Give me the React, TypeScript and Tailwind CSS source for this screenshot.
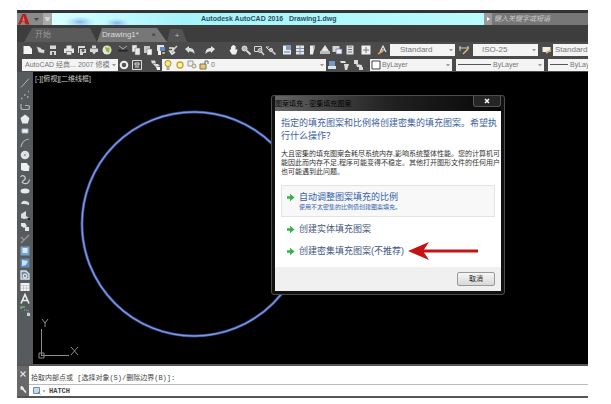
import React from "react";

type Glyph = React.ReactNode;

const g: Record<string, Glyph> = {
  new: <path d="M1.5 2h6l2.5 3v5H1.5z" fill="#f4f4f4" />,
  open: <path d="M1.500 2.500l4 1 1 1.500 3.500 1-1 3.500-5.500-1z" fill="#d9dcdd" stroke="#444" strokeWidth=".5" />,
  save: <g fill="#d6d9dc"><path d="M3 1.500h6v3.500H3zM3 7h6v4H3z" /><path d="M5 8h2v3H5z" fill="#555" /></g>,
  print: <g fill="#e6e6e6"><path d="M3.500 1.500h5V5h-5z" /><path d="M1 4.500h10V9H1z" /><path d="M3.500 7.500h5V11h-5z" stroke="#555" strokeWidth=".6" /></g>,
  preview: <g fill="#d8dadb"><path d="M2 2h7v2H3v5H2z" /><path d="M4 5h6v4H7v2H4z" /><circle cx="7" cy="6.500" r="1.500" fill="#555" /></g>,
  publish: <g fill="#d6d6d6"><path d="M4 1.500h4V4H4zM2 4.500h8V8H2z" /><path d="M4 8h4l-2 2.500z" /></g>,
  globe: <g><circle cx="6" cy="6" r="4.500" fill="#e3e8d8" /><path d="M4 3l5 1-1 5-3-2z" fill="#8fb64b" /><path d="M7 2l3 1-1 3z" fill="#e8c95a" /></g>,
  cut: <g stroke="#a9a9a9" fill="none"><path d="M2 2l6 4M10 2L4 6" /><path d="M1.500 6.500h9" stroke="#242424" strokeWidth="2" /></g>,
  copy: <g fill="#e9e9e9" stroke="#666" strokeWidth=".5"><path d="M2 1h5v7H2z" /><path d="M5 4h5v7H5z" /></g>,
  paste: <g><path d="M2 2h6v7H2z" fill="#c8c8c8" /><path d="M5 5h5v6H5z" fill="#f5f5f5" stroke="#666" strokeWidth=".5" /></g>,
  match: <g><path d="M2 1h7v6H2z" fill="#dfe8f2" /><path d="M5 3h5v4H5z" fill="#5e89bd" /><path d="M3 7l3 0v4H3z" fill="#f2f2f2" /><path d="M7 8h3v2H7z" fill="#c9a54a" /></g>,
  brush: <g fill="none" strokeWidth="1.700"><path d="M10 2L6 6" stroke="#e2c89a" /><path d="M2 4h4v3H3l2 3 3-2" stroke="#e5e5e5" /></g>,
  undo: <path d="M1 5l4-3v2c4 0 5.500 2 5.500 6C9 8 7.500 7.500 5 7.500V9z" fill="#d8dde0" />,
  redo: <path d="M11 5L7 2v2C3 4 1.500 6 1.500 10 3 8 4.500 7.500 7 7.500V9z" fill="#e1e4e6" />,
  hand: <path d="M3 5V2.500h1V1.500h1.200V1h1.200v1h1.200v4l1-1 1 .7L8 10.500H4L1.500 6.500z" fill="#f0f0f0" />,
  zoom: <g stroke="#dedede" fill="#b7bdc2"><circle cx="4.500" cy="4.500" r="2.500" /><path d="M6.500 6.500l4 4" strokeWidth="1.800" /></g>,
  zoomWin: <g fill="none" stroke="#d5d5d5"><path d="M1.500 2.500h7v5h-7z" /><circle cx="7" cy="6.500" r="2" fill="#999" /><path d="M8.500 8l2.500 3" strokeWidth="1.500" /></g>,
  zoomPrev: <g stroke="#d5d5d5" fill="#bbb"><path d="M1 3l3 3M1 3h3" fill="none" /><circle cx="6" cy="6" r="1.700" /><path d="M7.500 7.500l3 3" strokeWidth="1.600" /></g>,
  props: <g><path d="M2 1.500h8v9H2z" fill="#e9eef3" /><path d="M5 1.500h5V6H5z" fill="#7e9fc3" /><path d="M3 8h6" stroke="#777" /></g>,
  grid: <g><path d="M2 1.500h8v9H2z" fill="#e3e8ee" /><path d="M6 2v8M2 4.500h8M2 7.500h8" stroke="#7f93aa" /></g>,
  palette: <g><path d="M4 1.500h5l-2 9H4z" fill="#eee" /><path d="M7 2h2v3H7z" fill="#a0b2c6" /></g>,
  sheet: <g fill="#e6e6e6"><path d="M6 1l4 6H2z" /><path d="M1 7h10v3H1z" fill="#bdbdbd" /></g>,
  markup: <g><path d="M1.500 2h7v6h-7z" fill="#d5d5d5" /><path d="M5 5h6v5H5z" fill="#edf1f5" stroke="#59718e" strokeWidth=".7" /></g>,
  calc: <g><path d="M2.500 1.500h7v9h-7z" fill="#dde1e4" /><path d="M4 3h4M4 5.500h4M4 8h4" stroke="#707a84" /></g>,
  help: <g><path d="M1.500 1.500h9v9h-9z" fill="#f1f1f1" /><path d="M6 3v6M3 6h6" stroke="#777" /></g>,
  textStyle: <g><path d="M3 8l3-6 3 6M4 6h4" fill="none" stroke="#e7e7e7" strokeWidth="1.200" /><path d="M1 10l5-3" stroke="#e0a24d" strokeWidth="1.500" /></g>,
  dimStyle: <g><path d="M1 4h10M2 2v5M10 2v3" stroke="#ccc" fill="none" /><path d="M5 10l5-5" stroke="#e0ae55" strokeWidth="1.700" /></g>,
  tableStyle: <g><path d="M1.500 3h8v5h-8z" fill="#eee" /><path d="M5 9l5-3" stroke="#e0ae55" strokeWidth="1.700" /></g>,
  gear: <circle cx="6" cy="6" r="3.300" fill="#555" stroke="#f0f0f0" strokeWidth="2" />,
  workspace: <g fill="none" stroke="#ddd"><path d="M1.500 1.500h9v9h-9z" /><path d="M4 4h4v2H4zM4 8h4" /></g>,
  layers: <g fill="#ddd"><path d="M2 1.500h4l1 3H3z" /><path d="M4 5h5l2 2-4 1z" /><path d="M7 8h4v3H8z" fill="#f5f5f5" /></g>,
  bulb: <g><circle cx="6" cy="4.500" r="3" fill="#ffee75" stroke="#a78c28" /><path d="M4.500 8h3v3h-3z" fill="#aaa" /></g>,
  sun: <circle cx="6" cy="6" r="3" fill="#fff3a0" stroke="#c4a135" strokeWidth="1.300" />,
  freeze: <g fill="#eee" stroke="#999"><path d="M2 2h5v5H2z" /><circle cx="8" cy="7" r="2" fill="#f6e9a8" /></g>,
  lock: <g><path d="M2 5h6v5H2z" fill="#e0c978" stroke="#877540" /><path d="M7 5V2h3v3" fill="none" stroke="#666" /></g>,
  swatch: <path d="M2 2h8v8H2z" fill="#fff" stroke="#444" />,
  layerA: <g><path d="M3 2h6v5H3z" fill="#6f9bc7" /><path d="M2 7h8v3H2z" fill="#dbe4ea" /></g>,
  layerB: <g fill="#ddd"><path d="M1 2h5l1 2H2z" /><path d="M5 5h5l-2 6H6z" /></g>,
  layerC: <g fill="#ddd"><path d="M2 1h4v4H2z" /><path d="M4 5l6 1v2H5z" /><path d="M7 8h4v3H7z" /></g>,
  line: <path d="M2 10.500L10 1.500" stroke="#aab2b5" />,
  xline: <path d="M2 9.500h1.500M5 6h1.500M9 2.500h1M8 8h1.500" stroke="#aab2b5" strokeWidth="1.500" />,
  pline: <path d="M2 3v3.500q0 2 2 2h4.500q2 0 2-2t-2-2H6" fill="none" stroke="#aab2b5" strokeWidth="1.200" />,
  polygon: <path d="M6 1.500l4.500 3.500-1.700 5.500H3.200L1.500 5z" fill="#e9ecee" />,
  rect: <path d="M3 4h6v4H3z" fill="#edf2f8" stroke="#aebac5" />,
  arc: <path d="M2 10q1-7 8-8" fill="none" stroke="#aab2b5" strokeWidth="1.200" />,
  circle: <g><circle cx="6" cy="6" r="4.300" fill="#dfe3e5" /><circle cx="6" cy="6" r="1" fill="#89939a" /></g>,
  cloud: <path d="M2 2h6l1 2 1.500 1-.5 5H5L2 9z" fill="#efefef" />,
  spline: <path d="M1.500 4q2-2.500 4-.5t-1 4 1 3 5-4" fill="none" stroke="#c6cdd0" strokeWidth="1.200" />,
  ellipse: <ellipse cx="6" cy="6" rx="4.500" ry="2.500" fill="#e8eaec" />,
  earc: <path d="M2 7q1-4 5-3 4 1 3 4l-4-1z" fill="#dfe3e5" />,
  insert: <g fill="#d9e0e4"><path d="M2 5l5-3v5l3 2-5 1-3-1z" /><path d="M9 9h2v2H9z" fill="#222" /></g>,
  block: <g fill="#e4e6e8"><path d="M2 2h4l2 3-3 2-3-2z" /><path d="M6 6h4v4H6z" /></g>,
  point: <path d="M2 10l8-8M2 4l3 3" stroke="#929a9c" strokeWidth="1.300" />,
  hatch: <g><path d="M1.500 1.500h9v9h-9z" fill="#78a5d0" /><path d="M3.500 3h5v5h-5z" fill="#dcecff" /></g>,
  gradient: <g><path d="M1.500 1.500h9v9h-9z" fill="#5f8ec0" /><path d="M3 3l6 1-2 4-4 1z" fill="#cbe0f3" /></g>,
  region: <g fill="none" stroke="#d5e5ef" strokeWidth="1.300"><path d="M2 2h5l3 3v5H2z" fill="#75899a" /><circle cx="6" cy="7" r="1.800" /></g>,
  table: <g><path d="M1.500 2h9v8h-9z" fill="#f3f3f3" /><path d="M1.500 4.500h9M1.500 7.200h9M4.500 4v6M7.500 4v6" stroke="#b6b6b6" strokeWidth=".6" /></g>,
  mtext: <path d="M2 10.500L6 1.500l4 9M3.500 7.500h5" fill="none" stroke="#eee" strokeWidth="1.600" />,
  addSel: <g fill="none"><path d="M2 4V2h4" stroke="#6cb565" strokeWidth="1.500" /><path d="M5 5h4v4" stroke="#aaa" strokeDasharray="1 1" /><path d="M8 8h3v3H8z" fill="#b9d3ec" /></g>,
};

function Icon({ name }: { name: string }) {
  return (
    <svg viewBox="0 0 12 12" className="size-3 shrink-0" aria-hidden="true">
      {g[name]}
    </svg>
  );
}

function Tool({ name }: { name: string }) {
  return (
    <button type="button" aria-label={name} className="size-3 shrink-0">
      <Icon name={name} />
    </button>
  );
}

function Tools({ names, className }: { names: string[]; className: string }) {
  return (
    <div className={`flex shrink-0 justify-between ${className}`}>
      {names.map((n) => (
        <Tool key={n} name={n} />
      ))}
    </div>
  );
}

type ComboProps = {
  label: string;
  value: string;
  className: string;
  children?: React.ReactNode;
  text?: string;
  caret?: boolean;
};

function Combo({ label, value, className, children, text = "pl-1 text-[7px]", caret = true }: ComboProps) {
  return (
    <label className={`flex h-3 items-center overflow-hidden bg-[#f4f4f4] ${className}`}>
      {children}
      <select aria-label={label} className={`h-3 min-w-0 flex-1 appearance-none leading-3 text-[#777] ${text}`}>
        <option>{value}</option>
      </select>
      {caret && (
        <svg viewBox="0 0 6 6" className="mr-px size-[6px] shrink-0" aria-hidden="true">
          <path d="M1 2h4L3 4.500z" fill="#999" />
        </svg>
      )}
    </label>
  );
}

function Arrow() {
  return (
    <svg viewBox="0 0 9 9" className="size-[9px] shrink-0" aria-hidden="true">
      <path d="M1 3.200h3V.8l4.500 3.700L4 8.200V5.800H1z" fill="#35b34a" />
    </svg>
  );
}

function HatchDialog() {
  return (
    <div role="dialog" aria-label="图案填充" className="absolute left-[238px] top-[23px] w-[234px] rounded-[3px] border border-[#4c4c4c] bg-[#111] px-[3px] pb-[3px]">
      <div className="flex h-[15px] justify-between bg-linear-to-r from-[#666] via-[#222] to-[#080808]">
        <span className="text-[7px] leading-[15px] text-black">图案填充 - 密集填充图案</span>
        <button type="button" aria-label="关闭" className="flex h-[11px] w-7 items-center justify-center rounded-b-[3px] border border-t-0 border-[#555] bg-[#252525]">
          <svg viewBox="0 0 6 6" className="size-[6px]"><path d="M1 1l4 4M5 1L1 5" stroke="#fff" strokeWidth="1.500" /></svg>
        </button>
      </div>
      <div className="bg-white px-[6px] pb-[10px] pt-[6px] text-[#425780]">
        <h1 className="whitespace-nowrap text-[9px] leading-[13px] text-[#3c61a0]">
          指定的填充图案和比例将创建密集的填充图案。希望执
          <br />
          行什么操作？
        </h1>
        <p className="mt-[6px] whitespace-nowrap text-[7px] leading-[9px] text-[#333]">
          大且密集的填充图案会耗尽系统内存,影响系统整体性能。您的计算机可
          <br />
          能因此而内存不足,程序可能变得不稳定。其他打开图形文件的任何用户
          <br />
          也可能遇到此问题。
        </p>
        <button type="button" className="mt-[9px] flex h-8 w-full gap-1 border border-[#e4e4e4] bg-[#f8f8f8] pl-1 pt-[6px] text-left">
          <span className="pt-px"><Arrow /></span>
          <span className="flex flex-col whitespace-nowrap">
            <span className="text-[9px] leading-[11px] text-[#3261ad]">自动调整图案填充的比例</span>
            <span className="text-[6px] leading-[9px] text-[#3261ad]">使用不太密集的比例值创建图案填充。</span>
          </span>
        </button>
        <button type="button" className="mt-[6px] flex h-3 w-full items-center gap-1 pl-[5px] text-[9px] leading-3">
          <Arrow />
          创建实体填充图案
        </button>
        <button type="button" className="mt-[10px] flex h-3 w-full items-center gap-1 whitespace-nowrap pl-[5px] text-[9px] leading-3">
          <Arrow />
          创建密集填充图案(不推荐)
          <svg viewBox="0 0 72 18" className="-my-1 h-[18px] w-[72px] shrink-0" aria-hidden="true">
            <path d="M0 9L21 0l-5 7.500h54v3H16L21 18z" fill="#c51212" />
          </svg>
        </button>
      </div>
      <div className="flex h-6 items-center justify-end bg-[#f0f0f0] pr-[6px]">
        <button type="button" className="h-[14px] w-[38px] rounded-[2px] border border-[#999] bg-linear-to-b from-[#f6f6f6] to-[#d8d8d8] text-[7px] leading-3 text-[#222]">
          取消
        </button>
      </div>
    </div>
  );
}

const drawTools = ["line", "xline", "pline", "polygon", "rect", "arc", "circle", "cloud", "spline", "ellipse", "earc", "insert", "block", "point", "hatch", "gradient", "region", "table", "mtext", "addSel"];

export default function App() {
  return (
    <div className="flex min-h-screen flex-col bg-white pb-[6px] pl-[17px] pr-[23px] pt-[10px] font-['Liberation_Sans','Noto_Sans_CJK_SC',sans-serif]">
      <div className="flex flex-1 flex-col bg-[#4b4b4b]">
        <header className="flex h-[15px] border-t-[3px] border-[#333] bg-[#777]">
          <button type="button" aria-label="应用程序" className="flex w-[26px] items-center gap-1 bg-[#8a8a8a]">
            <svg viewBox="0 0 13 12" className="h-3 w-[13px]"><path d="M5.500 1h3l4 10.500H8.500L7.500 8.500H5.300L3.500 11.500H1z" fill="#b5201c" /><path d="M6.500 3l1.500 5H5z" fill="#e86a60" /></svg>
            <svg viewBox="0 0 5 5" className="size-[5px]"><path d="M0 1h5L2.500 4z" fill="#444" /></svg>
          </button>
          <button type="button" aria-label="快速访问" className="flex w-[9px] items-center justify-center bg-[#aaa]">
            <svg viewBox="0 0 5 5" className="size-[5px]"><path d="M0 1h5M1 3h3" stroke="#fff" /></svg>
          </button>
          <div className="flex min-w-0 flex-1 justify-center bg-linear-to-r from-[#d9ffff] via-[#a5f4fa] via-30% to-[#b9fcfe]">
            <svg viewBox="0 0 96 12" className="h-3 w-24 shrink-0" aria-hidden="true">
              <defs>
                <radialGradient id="glow"><stop offset="0" stopColor="#6a8ce8" stopOpacity=".7" /><stop offset="1" stopColor="#8fd8f4" stopOpacity="0" /></radialGradient>
              </defs>
              <ellipse cx="28" cy="9" rx="16" ry="6" fill="url(#glow)" />
              <ellipse cx="65" cy="10" rx="13" ry="5" fill="url(#glow)" />
            </svg>
            <span className="min-w-0 flex-1 whitespace-nowrap pl-[53px] text-[7px] font-bold leading-3 text-[#2b4f5e]">Autodesk AutoCAD 2016 &nbsp; Drawing1.dwg</span>
          </div>
          <button type="button" aria-label="展开" className="flex w-2 items-center justify-center bg-[#999]">
            <svg viewBox="0 0 4 4" className="size-1"><path d="M1 0l3 2-3 2z" fill="#fff" /></svg>
          </button>
          <input aria-label="搜索" placeholder="键入关键字或短语" className="w-24 bg-[#777] pl-[2px] text-[7px] italic leading-3 placeholder:text-[#ccc]" />
        </header>

        <nav className="flex h-[17px] items-end bg-[#3d3d3d] pl-[7px] text-[8px] leading-[14px]">
          <button type="button" className="h-[14px] w-[73px] bg-[#5a5a5a] pl-[11px] text-left text-[#999] [clip-path:polygon(8px_0,66px_0,100%_100%,0_100%)]">开始</button>
          <button type="button" className="flex h-[14px] w-[70px] justify-between bg-[#777] pl-[5px] pr-[11px] text-[#ddd] [clip-path:polygon(5px_0,60px_0,100%_100%,0_100%)]">
            <span>Drawing1*</span>
            <span className="text-[#333]">×</span>
          </button>
          <button type="button" aria-label="新图形" className="h-[13px] w-5 bg-[#535353] text-[#bbb] [clip-path:polygon(3px_0,15px_0,100%_100%,0_100%)]">+</button>
        </nav>

        <div className="flex h-[15px] items-center overflow-hidden pl-[5px]">
          <Tools names={["new", "open", "save"]} className="w-[37px]" />
          <Tools names={["print", "preview", "publish", "globe"]} className="ml-1 w-[50px]" />
          <Tools names={["cut", "copy", "paste", "match", "brush"]} className="ml-1 w-[62px]" />
          <Tools names={["undo", "redo"]} className="ml-[5px] w-8" />
          <Tools names={["hand", "zoom", "zoomWin", "zoomPrev"]} className="ml-3 w-[49px]" />
          <Tools names={["props", "grid", "palette", "sheet", "markup", "calc"]} className="ml-1 w-[75px]" />
          <Tools names={["help"]} className="ml-1" />
          <Tools names={["textStyle"]} className="ml-[5px]" />
          <Combo label="文字样式" value="Standard" className="ml-px w-[65px] shrink-0" text="pl-[10px] text-[8px]" />
          <Tools names={["dimStyle"]} className="mx-[3px]" />
          <Combo label="标注样式" value="ISO-25" className="w-[65px] shrink-0" text="pl-[9px] text-[8px]" />
          <Tools names={["tableStyle"]} className="ml-[3px]" />
          <Combo label="表格样式" value="Standard" className="min-w-0 flex-1" text="pl-[2px] text-[8px]" caret={false} />
        </div>

        <div className="flex h-[15px] items-center overflow-hidden pl-[5px]">
          <Combo label="工作空间" value="AutoCAD 经典... 2007 修模" className="w-24 shrink-0" text="pl-[3px] text-[7px]" />
          <Tools names={["gear", "workspace"]} className="w-[25px]" />
          <Tools names={["layers"]} className="ml-[6px] mr-px" />
          <Combo label="图层" value="0" className="w-[164px] shrink-0" text="pl-px text-[7px]">
            <Icon name="bulb" />
            <Icon name="sun" />
            <Icon name="freeze" />
            <Icon name="lock" />
          </Combo>
          <Tools names={["layerA", "layerB", "layerC"]} className="w-[38px]" />
          <Combo label="颜色" value="ByLayer" className="ml-[6px] w-[82px] shrink-0" text="pl-0 text-[7px]">
            <Icon name="swatch" />
          </Combo>
          <Combo label="线型" value="ByLayer" className="ml-1 w-[88px] shrink-0" text="pl-[2px] text-[7px]">
            <span className="ml-[2px] w-[33px] border-t border-[#555]" />
          </Combo>
          <Combo label="线宽" value="ByLayer" className="ml-1 min-w-0 flex-1" text="pl-[2px] text-[7px]" caret={false}>
            <span className="ml-[2px] w-[18px] shrink-0 border-t border-[#555]" />
          </Combo>
        </div>

        <main className="flex flex-1">
          <div className="flex w-4 shrink-0 flex-col items-center bg-[#575b5d] pt-[5px]">
            {drawTools.map((n) => (
              <Tool key={n} name={n} />
            ))}
          </div>
          <div className="relative min-w-0 flex-1 overflow-hidden bg-black">
            <p className="pl-[2px] pt-[2px] text-[7px] leading-[10px] text-[#ccc]">[-][俯视][二维线框]</p>
            <svg className="absolute left-0 top-0 h-full w-full" aria-hidden="true">
              <circle cx="161" cy="152" r="112" fill="none" stroke="#26459a" strokeWidth="3" />
              <circle cx="161" cy="152" r="112" fill="none" stroke="#8499cc" strokeWidth="1.500" />
              <g fill="none" stroke="#8d8d8d">
                <path d="M8.500 257v27M8.500 283.500H36M6 281h5v5H6z" />
                <path d="M9 247l3 4 3-4M12 251v4M38 275l7 8M45 275l-7 8" />
              </g>
            </svg>
            <HatchDialog />
          </div>
        </main>

        <footer className="flex h-[34px] border-b-2 border-t-2 border-[#555] bg-white">
          <div className="flex w-3 shrink-0 flex-col items-center justify-around bg-[#686868]">
            <button type="button" aria-label="关闭命令行"><svg viewBox="0 0 8 8" className="size-2"><path d="M1.500 1.500l5 5M6.500 1.500l-5 5" stroke="#ddd" strokeWidth="1.300" /></svg></button>
            <button type="button" aria-label="自定义"><svg viewBox="0 0 8 8" className="size-2"><path d="M3.500 3.500l3.500 4" stroke="#eee" strokeWidth="1.700" /><path d="M1 2l2-1 2 2-2 2-2-1 1-1z" fill="#eee" /></svg></button>
          </div>
          <div className="flex min-w-0 flex-1 flex-col font-['Liberation_Mono','Noto_Sans_CJK_SC',monospace] text-[#444]">
            <p className="h-[19px] border-b border-[#bbb] pl-[2px] pt-2 text-[7px] leading-[9px]">拾取内部点或 [选择对象(S)/删除边界(B)]:</p>
            <label className="flex flex-1 items-center pl-1">
              <svg viewBox="0 0 14 8" className="h-2 w-[14px] shrink-0"><path d="M.5.5h6v6h-6z" fill="#c7daed" stroke="#6f8dad" /><path d="M5 5l2.500 2.500" stroke="#6f8dad" /><path d="M9.500 3.500h3L11 5z" fill="#777" /></svg>
              <input aria-label="命令" defaultValue="HATCH" className="h-[10px] min-w-0 flex-1 pl-[2px] text-[7px] font-bold leading-[10px]" />
            </label>
          </div>
        </footer>
      </div>
    </div>
  );
}
